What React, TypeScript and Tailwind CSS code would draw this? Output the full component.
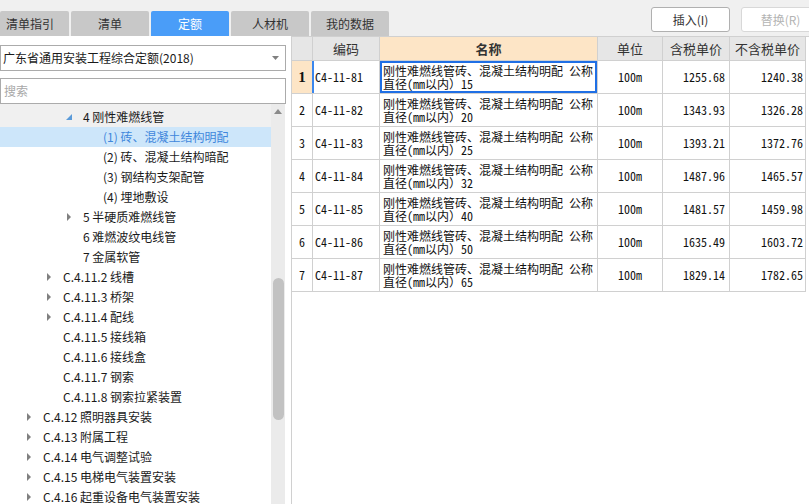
import React from 'react';

const UI = "font-['Noto_Sans_CJK_SC','Noto_Sans',sans-serif]";
const MONO = "font-['Noto_Sans_Mono_CJK_SC','Liberation_Mono','Noto_Sans_CJK_SC',monospace]";

const rows = [
  ['C4-11-81', '15', '1255.68', '1240.38'],
  ['C4-11-82', '20', '1343.93', '1326.28'],
  ['C4-11-83', '25', '1393.21', '1372.76'],
  ['C4-11-84', '32', '1487.96', '1465.57'],
  ['C4-11-85', '40', '1481.57', '1459.98'],
  ['C4-11-86', '50', '1635.49', '1603.72'],
  ['C4-11-87', '65', '1829.14', '1782.65'],
];

type Node = { depth: number; label: string; arrow?: 'open' | 'closed'; selected?: boolean; hover?: boolean };

const tree: Node[] = [
  { depth: 2, label: '4 刚性难燃线管', arrow: 'open', hover: true },
  { depth: 3, label: '(1) 砖、混凝土结构明配', selected: true },
  { depth: 3, label: '(2) 砖、混凝土结构暗配' },
  { depth: 3, label: '(3) 钢结构支架配管' },
  { depth: 3, label: '(4) 埋地敷设' },
  { depth: 2, label: '5 半硬质难燃线管', arrow: 'closed' },
  { depth: 2, label: '6 难燃波纹电线管' },
  { depth: 2, label: '7 金属软管' },
  { depth: 1, label: 'C.4.11.2 线槽', arrow: 'closed' },
  { depth: 1, label: 'C.4.11.3 桥架', arrow: 'closed' },
  { depth: 1, label: 'C.4.11.4 配线', arrow: 'closed' },
  { depth: 1, label: 'C.4.11.5 接线箱' },
  { depth: 1, label: 'C.4.11.6 接线盒' },
  { depth: 1, label: 'C.4.11.7 钢索' },
  { depth: 1, label: 'C.4.11.8 钢索拉紧装置' },
  { depth: 0, label: 'C.4.12 照明器具安装', arrow: 'closed' },
  { depth: 0, label: 'C.4.13 附属工程', arrow: 'closed' },
  { depth: 0, label: 'C.4.14 电气调整试验', arrow: 'closed' },
  { depth: 0, label: 'C.4.15 电梯电气装置安装', arrow: 'closed' },
  { depth: 0, label: 'C.4.16 起重设备电气装置安装', arrow: 'closed' },
];

const indent: Record<number, string> = {
  0: 'pl-[27px]',
  1: 'pl-[47px]',
  2: 'pl-[67px]',
  3: 'pl-[87px]',
};

function Arrow({ kind }: { kind?: 'open' | 'closed' }) {
  if (kind === 'open') {
    return (
      <svg width="7" height="7" viewBox="0 0 7 7" className="ml-[-1px]">
        <polygon points="6,0 6,6 0,6" fill="#5b9bd9" />
      </svg>
    );
  }
  if (kind === 'closed') {
    return (
      <svg width="5" height="8" viewBox="0 0 5 8">
        <polygon points="0,0 4,4 0,8" fill="#808080" />
      </svg>
    );
  }
  return null;
}

const tabs = ['清单指引', '清单', '定额', '人材机', '我的数据'];

export default function App() {
  return (
    <div className={`w-[809px] h-[504px] bg-white flex flex-col overflow-hidden text-[#1a1a1a] ${UI}`}>
      {/* top bar */}
      <div className="h-[36px] shrink-0 bg-[#f0f0f0] flex">
        <div className="flex items-end gap-[2px]">
          {tabs.map((t, i) => (
            <div
              key={t}
              className={`h-[25px] flex items-center text-[12px] leading-none rounded-t-[2px] ${
                i === 0 ? 'w-[69px] pl-[6px]' : 'w-[78px] justify-center'
              } ${i === 2 ? 'bg-[#4a9df8] text-white' : 'bg-[#c8c8c8] text-[#333]'}`}
            >
              {t}
            </div>
          ))}
        </div>
        <div className="ml-auto flex items-start pt-[7px] gap-[11px] mr-[-11px]">
          <div className="w-[79px] h-[25px] border border-[#b0b0b0] rounded-[3px] bg-white flex items-center justify-center text-[12px] text-[#333]">
            插入(I)
          </div>
          <div className="w-[79px] h-[25px] border border-[#d8d8d8] rounded-[3px] bg-white flex items-center justify-center text-[12px] text-[#b4b4b4]">
            替换(R)
          </div>
        </div>
      </div>

      <div className="flex flex-1 min-h-0">
        {/* left panel */}
        <div className="w-[286px] shrink-0 flex flex-col">
          <div className="mt-[9px] h-[26px] border border-[#ababab] flex items-center pl-[2px] pr-[6px] text-[12px]">
            <span className="flex-1">广东省通用安装工程综合定额(2018)</span>
            <svg width="7" height="4" viewBox="0 0 7 4">
              <polygon points="0,0 7,0 3.5,4" fill="#808080" />
            </svg>
          </div>
          <div className="mt-[7px] h-[26px] border border-[#ababab] flex items-center pl-[3px] text-[12px] text-[#a8a8a8]">
            搜索
          </div>
          <div className="flex flex-1 min-h-0">
            <div className="w-[271px] shrink-0 flex flex-col">
              {tree.map((n, i) => (
                <div
                  key={i}
                  className={`shrink-0 flex items-center text-[12px] leading-none ${indent[n.depth]} ${
                    i === 0 ? 'h-[23px] pt-[3px]' : 'h-[20px]'
                  } ${n.hover ? 'bg-[#f0f0f0]' : ''} ${n.selected ? 'bg-[#cde6fa] text-[#3f87dc]' : ''}`}
                >
                  <span className="w-[16px] flex items-center">
                    <Arrow kind={n.arrow} />
                  </span>
                  <span className="whitespace-nowrap">{n.label}</span>
                </div>
              ))}
            </div>
            <div className="w-[14px] shrink-0 bg-[#ebebeb] flex flex-col items-center">
              <svg width="8" height="5" viewBox="0 0 8 5" className="mt-[5px]">
                <polygon points="0,5 8,5 4,0" fill="#8a8a8a" />
              </svg>
              <div className="mt-[164px] w-[11px] h-[142px] rounded-full bg-[#c2c2c2]" />
            </div>
          </div>
        </div>
        <div className="w-[5px] shrink-0" />

        {/* right panel */}
        <div className="flex-1 border-l border-t border-[#d0d0d0] flex flex-col">
          <div className="w-[514px] flex flex-col">
            <div className="flex h-[24px] border-b border-[#d0d0d0] text-[13px] text-[#333]">
              <div className="w-[21px] bg-[#e6e6e6] border-r border-[#d0d0d0]" />
              <div className="w-[67px] bg-[#e6e6e6] border-r border-[#d0d0d0] flex items-center justify-center">编码</div>
              <div className="w-[218px] bg-[#fde5c6] border-r border-[#d0d0d0] flex items-center justify-center font-bold">名称</div>
              <div className="w-[65px] bg-[#e6e6e6] border-r border-[#d0d0d0] flex items-center justify-center">单位</div>
              <div className="w-[67px] bg-[#e6e6e6] border-r border-[#d0d0d0] flex items-center justify-center">含税单价</div>
              <div className="w-[76px] bg-[#e6e6e6] border-r border-[#d0d0d0] flex items-center justify-center">不含税单价</div>
            </div>
            {rows.map((r, i) => {
              const sel = i === 0;
              return (
                <div key={r[0]} className={`flex h-[33px] border-b border-[#d0d0d0] text-[12px] text-[#111] ${MONO}`}>
                  <div
                    className={`w-[21px] border-r flex items-center justify-center ${
                      sel
                        ? "bg-[#fde5c6] border-[#3b87ee] font-bold font-['Liberation_Serif',serif] text-[15px]"
                        : 'border-[#d0d0d0]'
                    }`}
                  >
                    {i + 1}
                  </div>
                  <div
                    className={`w-[67px] border-r border-[#d0d0d0] flex items-center pl-[2px] ${
                      sel ? 'shadow-[inset_1px_0_0_#3b87ee]' : ''
                    }`}
                  >
                    {r[0]}
                  </div>
                  <div
                    className={`w-[218px] border-r border-[#d0d0d0] pl-[3px] pt-[3px] leading-[13px] whitespace-nowrap ${
                      sel ? 'shadow-[inset_0_0_0_2px_#1f6fe5]' : ''
                    }`}
                  >
                    刚性难燃线管砖、混凝土结构明配 公称
                    <br />
                    直径(mm以内）{r[1]}
                  </div>
                  <div className="w-[65px] border-r border-[#d0d0d0] flex items-center justify-center">100m</div>
                  <div className="w-[67px] border-r border-[#d0d0d0] flex items-center justify-end pr-[4px]">{r[2]}</div>
                  <div className="w-[76px] border-r border-[#d0d0d0] flex items-center justify-end pr-[2px]">{r[3]}</div>
                </div>
              );
            })}
          </div>
        </div>
      </div>
    </div>
  );
}
